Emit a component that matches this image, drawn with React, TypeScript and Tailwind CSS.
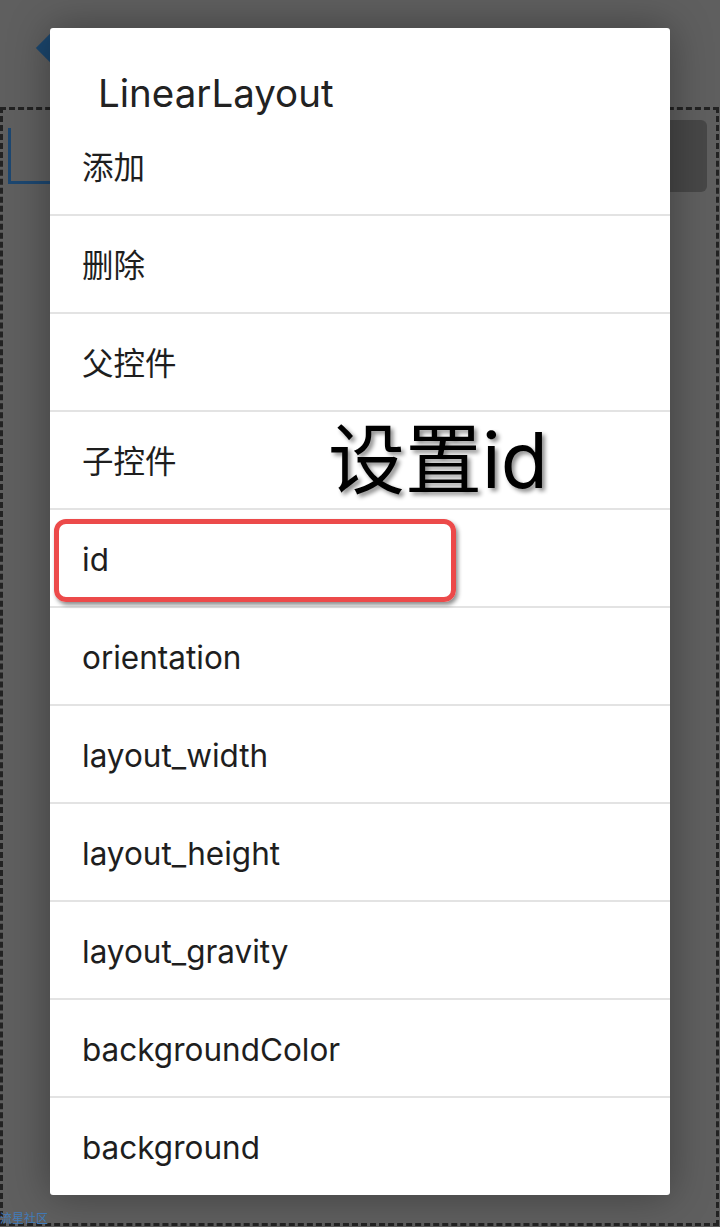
import { FC } from "react";

const items = [
  "添加",
  "删除",
  "父控件",
  "子控件",
  "id",
  "orientation",
  "layout_width",
  "layout_height",
  "layout_gravity",
  "backgroundColor",
  "background",
];

const font = { fontFamily: '"Inter", "Noto Sans CJK SC", sans-serif' };

const Backdrop: FC = () => (
  <>
    {/* editor canvas behind the modal */}
    <div className="absolute left-[40px] top-[38px] w-[20px] h-[20px] rotate-45 bg-[#1f4e7a]" />
    <div className="absolute left-0 right-[1px] top-[107px] bottom-[1px] border-[3px] border-dashed border-[#262626]" />
    <div className="absolute left-[8px] top-[128px] w-[3px] h-[56px] bg-[#21507d]" />
    <div className="absolute left-[8px] top-[181px] w-[44px] h-[3px] bg-[#21507d]" />
    <div className="absolute left-[652px] top-[120px] w-[55px] h-[72px] rounded-md bg-[#505050]" />
    <span className="absolute left-0 bottom-[1px] text-[12px] leading-[14px] text-[#4a8ad0]" style={font}>
      流星社区
    </span>
  </>
);

export default function App() {
  return (
    <div className="relative w-[720px] h-[1227px] overflow-hidden bg-[#6a6a6a]" style={font}>
      <Backdrop />

      {/* Modal */}
      <div className="absolute inset-0 bg-black/10 flex items-start pl-[50px] pt-[28px]">
        <div className="w-[620px] h-[1167px] bg-white rounded-[3px] shadow-[0_0_40px_rgba(0,0,0,0.35)] flex flex-col">
          <h1 className="pl-[48px] pt-[40px] text-[38.5px] leading-[50px] text-[#222]">
            LinearLayout
          </h1>
          <ul className="flex flex-col">
            {items.map((item, i) => (
              <li
                key={item}
                className={
                  (i === 0 ? "h-[96px] " : "h-[98px] border-t-2 border-[#e3e3e3] ") +
                  "flex items-center pl-[32px] pt-[4px] text-[31.5px] text-[#1e1e1e]"
                }
              >
                {item}
              </li>
            ))}
          </ul>
        </div>

        {/* annotation */}
        <div className="absolute left-[54px] top-[519px] w-[402px] h-[83px] rounded-[12px] border-[5px] border-[#ec4a4a] shadow-[2px_3px_4px_rgba(0,0,0,0.45)]" />
        <div className="absolute left-[328px] top-[412px] text-[77px] leading-[96px] text-black [text-shadow:3px_3px_4px_rgba(0,0,0,0.45)]">
          设置id
        </div>
      </div>
    </div>
  );
}
